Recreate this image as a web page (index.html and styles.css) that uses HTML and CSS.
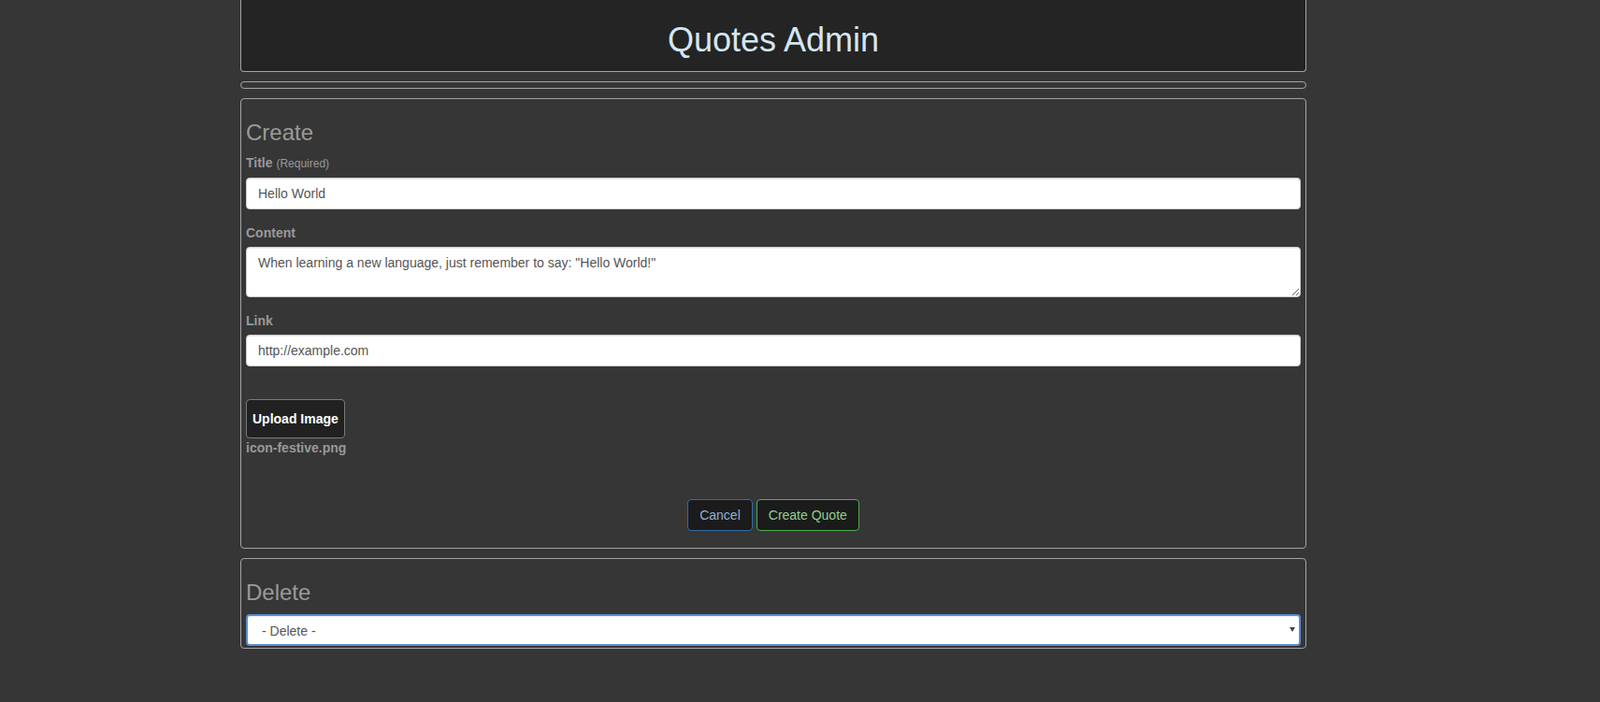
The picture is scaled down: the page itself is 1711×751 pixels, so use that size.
FILE: index.html
```html
<!DOCTYPE html>
<html lang="en">
<head>
<meta charset="utf-8">
<title>Quotes Admin</title>
<link rel="stylesheet" href="styles.css">
</head>
<body>
<div class="page">
  <header class="site-header">
    <h1 class="site-title">Quotes Admin</h1>
  </header>
  <div class="bar"></div>

  <section class="panel panel-create">
    <h3 class="panel-heading">Create</h3>
    <div class="form-group">
      <label class="field-label">Title <small class="hint">(Required)</small></label>
      <input class="form-control" type="text" value="Hello World">
    </div>
    <div class="form-group">
      <label class="field-label">Content</label>
      <textarea class="form-control textarea" rows="2">When learning a new language, just remember to say: "Hello World!"</textarea>
    </div>
    <div class="form-group">
      <label class="field-label">Link</label>
      <input class="form-control" type="text" value="http://example.com">
    </div>
    <div class="upload-group">
      <button class="btn-upload" type="button">Upload Image</button>
      <div class="file-name">icon-festive.png</div>
    </div>
    <div class="actions">
      <button class="btn btn-cancel" type="button">Cancel</button>
      <button class="btn btn-create" type="button">Create Quote</button>
    </div>
  </section>

  <section class="panel panel-delete">
    <h3 class="panel-heading">Delete</h3>
    <div class="select-wrap">
      <select class="form-control select">
        <option>- Delete -</option>
      </select>
    </div>
  </section>
</div>
</body>
</html>
```

FILE: styles.css
```css
* { box-sizing: border-box; }

html, body {
  margin: 0;
  padding: 0;
  background: #363636;
  font-family: "Liberation Sans", Arial, sans-serif;
  font-size: 14px;
  line-height: 20px;
  color: #999;
}

.page {
  width: 1140px;
  margin-left: 257px;
}

.site-header {
  height: 77px;
  background: #242424;
  border: 1px solid #a3a3a3;
  border-top: none;
  border-radius: 0 0 4px 4px;
  padding-top: 23px;
  text-align: center;
}

.site-title {
  margin: 0;
  font-size: 36px;
  line-height: 1.1;
  font-weight: normal;
  color: #d3e6f2;
}

.bar {
  margin-top: 10px;
  height: 8px;
  border: 1px solid #a3a3a3;
  border-radius: 4px;
}

.panel {
  margin-top: 10px;
  border: 1px solid #a3a3a3;
  border-radius: 4px;
  padding: 0 5px;
}

.panel-create { padding-bottom: 18px; }
.panel-delete { padding-bottom: 2px; }

.panel-heading {
  margin: 23px 0 9px;
  font-size: 24px;
  line-height: 1.1;
  font-weight: normal;
  color: #9a9a9a;
}

.form-group { margin-bottom: 15px; }

.field-label {
  display: block;
  margin-bottom: 5px;
  font-weight: bold;
  color: #999;
}

.hint {
  font-size: 12px;
  font-weight: normal;
}

.form-control {
  display: block;
  width: 100%;
  height: 34px;
  padding: 6px 12px;
  font-family: "Liberation Sans", Arial, sans-serif;
  font-size: 14px;
  line-height: 20px;
  color: #555;
  background: #fff;
  border: 1px solid #ccc;
  border-radius: 4px;
  box-shadow: inset 0 1px 1px rgba(0,0,0,0.075);
}

.textarea {
  height: 54px;
  resize: vertical;
}

.upload-group {
  padding-top: 20px;
}

.btn-upload {
  display: block;
  height: 42px;
  padding: 10px 6px;
  background: #212121;
  color: #fff;
  border: 1px solid #7a7a7a;
  border-radius: 4px;
  font-family: "Liberation Sans", Arial, sans-serif;
  font-size: 14px;
  line-height: 20px;
  font-weight: bold;
}

.file-name {
  font-weight: bold;
  color: #999;
}

.actions {
  margin-top: 45px;
  display: flex;
  justify-content: center;
  gap: 4px;
}

.btn {
  height: 34px;
  padding: 6px 12px;
  background: #1b1b1b;
  border: 1px solid;
  border-radius: 4px;
  font-family: "Liberation Sans", Arial, sans-serif;
  font-size: 14px;
  line-height: 20px;
}

.btn-cancel {
  border-color: #2e6da4;
  color: #8db3d9;
}

.btn-create {
  border-color: #4cae4c;
  color: #8fd18f;
}

.select-wrap {
  position: relative;
}

.select {
  -webkit-appearance: none;
  appearance: none;
  padding-left: 15px;
  border: 2px solid #5b8bd8;
  box-shadow: inset 0 1px 1px rgba(0,0,0,0.075);
  outline: none;
}

.select-wrap::after {
  content: "";
  position: absolute;
  right: 6px;
  top: 14px;
  border-left: 3px solid transparent;
  border-right: 3px solid transparent;
  border-top: 5px solid #444;
  pointer-events: none;
}
```
